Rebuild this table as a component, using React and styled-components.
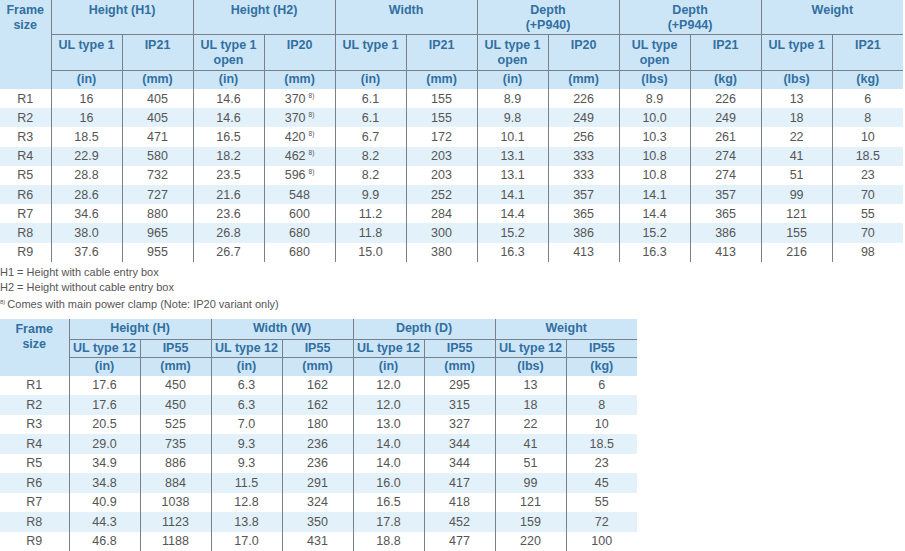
import React from 'react';
import styled, { createGlobalStyle } from 'styled-components';

const GlobalStyle = createGlobalStyle`
  html, body { margin: 0; padding: 0; background: #fff; }
  body { font-family: "Liberation Sans", Arial, sans-serif; }
`;

const line = '#76818b';
const headBg = '#cce6f7';
const stripe = '#e3f1fb';
const headInk = '#336fa1';
const ink = '#555555';

const Page = styled.div`
  width: 905px;
  height: 551px;
  overflow: hidden;
`;

const Table = styled.table`
  border-collapse: collapse;
  table-layout: fixed;
  width: ${p => p.$width}px;
  font-size: 12.5px;
`;

const HeadRow = styled.tr`
  height: ${p => p.$h}px;
`;

const Head = styled.th`
  background: ${headBg};
  color: ${headInk};
  font-weight: bold;
  text-align: center;
  vertical-align: ${p => (p.$top ? 'top' : 'middle')};
  padding: ${p => (p.$top ? '3px 2px 0' : '0 2px')};
  line-height: 15px;
  border-left: ${p => (p.$first ? 'none' : `1px solid ${line}`)};
  border-bottom: ${p => (p.$first ? 'none' : `1px solid ${line}`)};
`;

const Unit = styled(Head)`
  border-bottom: none;
`;

const BodyRow = styled.tr`
  height: ${p => p.$h}px;
  background: ${p => (p.$alt ? stripe : '#fff')};
  & + & td { border-top: 1px solid ${line}; }
`;

const Cell = styled.td`
  color: ${ink};
  text-align: center;
  padding: 0;
  line-height: 14px;
  border-left: ${p => (p.$first ? 'none' : `1px solid ${line}`)};
`;

const Sup = styled.sup`
  font-size: 6.5px;
  vertical-align: 5px;
  line-height: 0;
  margin-left: 3px;
`;

const Notes = styled.div`
  padding: 3px 0 0;
  height: 57px;
  box-sizing: border-box;
  color: ${ink};
  font-size: 11px;
  line-height: 15px;
`;

const Mark = styled.span`
  font-size: 6px;
  vertical-align: 4px;
  margin-right: 2px;
`;

const t1Groups = ['Height (H1)', 'Height (H2)', 'Width', 'Depth\n(+P940)', 'Depth\n(+P944)', 'Weight'];
const t1Sub = [
  'UL type 1', 'IP21', 'UL type 1\nopen', 'IP20', 'UL type 1', 'IP21',
  'UL type 1\nopen', 'IP20', 'UL type\nopen', 'IP21', 'UL type 1', 'IP21',
];
const t1Units = ['(in)', '(mm)', '(in)', '(mm)', '(in)', '(mm)', '(in)', '(mm)', '(lbs)', '(kg)', '(lbs)', '(kg)'];
const t1Rows = [
  ['R1', '16', '405', '14.6', '370*', '6.1', '155', '8.9', '226', '8.9', '226', '13', '6'],
  ['R2', '16', '405', '14.6', '370*', '6.1', '155', '9.8', '249', '10.0', '249', '18', '8'],
  ['R3', '18.5', '471', '16.5', '420*', '6.7', '172', '10.1', '256', '10.3', '261', '22', '10'],
  ['R4', '22.9', '580', '18.2', '462*', '8.2', '203', '13.1', '333', '10.8', '274', '41', '18.5'],
  ['R5', '28.8', '732', '23.5', '596*', '8.2', '203', '13.1', '333', '10.8', '274', '51', '23'],
  ['R6', '28.6', '727', '21.6', '548', '9.9', '252', '14.1', '357', '14.1', '357', '99', '70'],
  ['R7', '34.6', '880', '23.6', '600', '11.2', '284', '14.4', '365', '14.4', '365', '121', '55'],
  ['R8', '38.0', '965', '26.8', '680', '11.8', '300', '15.2', '386', '15.2', '386', '155', '70'],
  ['R9', '37.6', '955', '26.7', '680', '15.0', '380', '16.3', '413', '16.3', '413', '216', '98'],
];

const t2Groups = ['Height (H)', 'Width (W)', 'Depth (D)', 'Weight'];
const t2Sub = ['UL type 12', 'IP55', 'UL type 12', 'IP55', 'UL type 12', 'IP55', 'UL type 12', 'IP55'];
const t2Units = ['(in)', '(mm)', '(in)', '(mm)', '(in)', '(mm)', '(lbs)', '(kg)'];
const t2Rows = [
  ['R1', '17.6', '450', '6.3', '162', '12.0', '295', '13', '6'],
  ['R2', '17.6', '450', '6.3', '162', '12.0', '315', '18', '8'],
  ['R3', '20.5', '525', '7.0', '180', '13.0', '327', '22', '10'],
  ['R4', '29.0', '735', '9.3', '236', '14.0', '344', '41', '18.5'],
  ['R5', '34.9', '886', '9.3', '236', '14.0', '344', '51', '23'],
  ['R6', '34.8', '884', '11.5', '291', '16.0', '417', '99', '45'],
  ['R7', '40.9', '1038', '12.8', '324', '16.5', '418', '121', '55'],
  ['R8', '44.3', '1123', '13.8', '350', '17.8', '452', '159', '72'],
  ['R9', '46.8', '1188', '17.0', '431', '18.8', '477', '220', '100'],
];

function Lines({ text }) {
  const parts = text.split('\n');
  return parts.map((p, i) => (
    <React.Fragment key={i}>
      {p}
      {i < parts.length - 1 && <br />}
    </React.Fragment>
  ));
}

function Value({ v }) {
  if (v.endsWith('*')) {
    return (
      <>
        {v.slice(0, -1)}
        <Sup>8)</Sup>
      </>
    );
  }
  return v;
}

function SpecTable({ width, frameWidth, colWidth, groups, sub, units, rows, heads, rowH, top }) {
  return (
    <Table $width={width}>
      <colgroup>
        <col style={{ width: frameWidth }} />
        {sub.map((_, i) => (
          <col key={i} style={{ width: colWidth }} />
        ))}
      </colgroup>
      <thead>
        <HeadRow $h={heads[0]}>
          <Head rowSpan={3} $first $top>
            Frame
            <br />
            size
          </Head>
          {groups.map(g => (
            <Head key={g} colSpan={2} $top={top}>
              <Lines text={g} />
            </Head>
          ))}
        </HeadRow>
        <HeadRow $h={heads[1]}>
          {sub.map((s, i) => (
            <Head key={i} $top={top}>
              <Lines text={s} />
            </Head>
          ))}
        </HeadRow>
        <HeadRow $h={heads[2]}>
          {units.map((u, i) => (
            <Unit key={i}>{u}</Unit>
          ))}
        </HeadRow>
      </thead>
      <tbody>
        {rows.map((r, i) => (
          <BodyRow key={r[0]} $h={rowH} $alt={i % 2 === 1}>
            {r.map((v, j) => (
              <Cell key={j} $first={j === 0}>
                <Value v={v} />
              </Cell>
            ))}
          </BodyRow>
        ))}
      </tbody>
    </Table>
  );
}

export default function App() {
  return (
    <Page>
      <GlobalStyle />
      <SpecTable
        width={903}
        frameWidth={51}
        colWidth={71}
        groups={t1Groups}
        sub={t1Sub}
        units={t1Units}
        rows={t1Rows}
        heads={[34, 36, 19]}
        rowH={19.2}
        top
      />
      <Notes>
        <div>H1 = Height with cable entry box</div>
        <div>H2 = Height without cable entry box</div>
        <div>
          <Mark>8)</Mark>Comes with main power clamp (Note: IP20 variant only)
        </div>
      </Notes>
      <SpecTable
        width={637}
        frameWidth={69}
        colWidth={71}
        groups={t2Groups}
        sub={t2Sub}
        units={t2Units}
        rows={t2Rows}
        heads={[21, 18, 18]}
        rowH={19.5}
      />
    </Page>
  );
}
